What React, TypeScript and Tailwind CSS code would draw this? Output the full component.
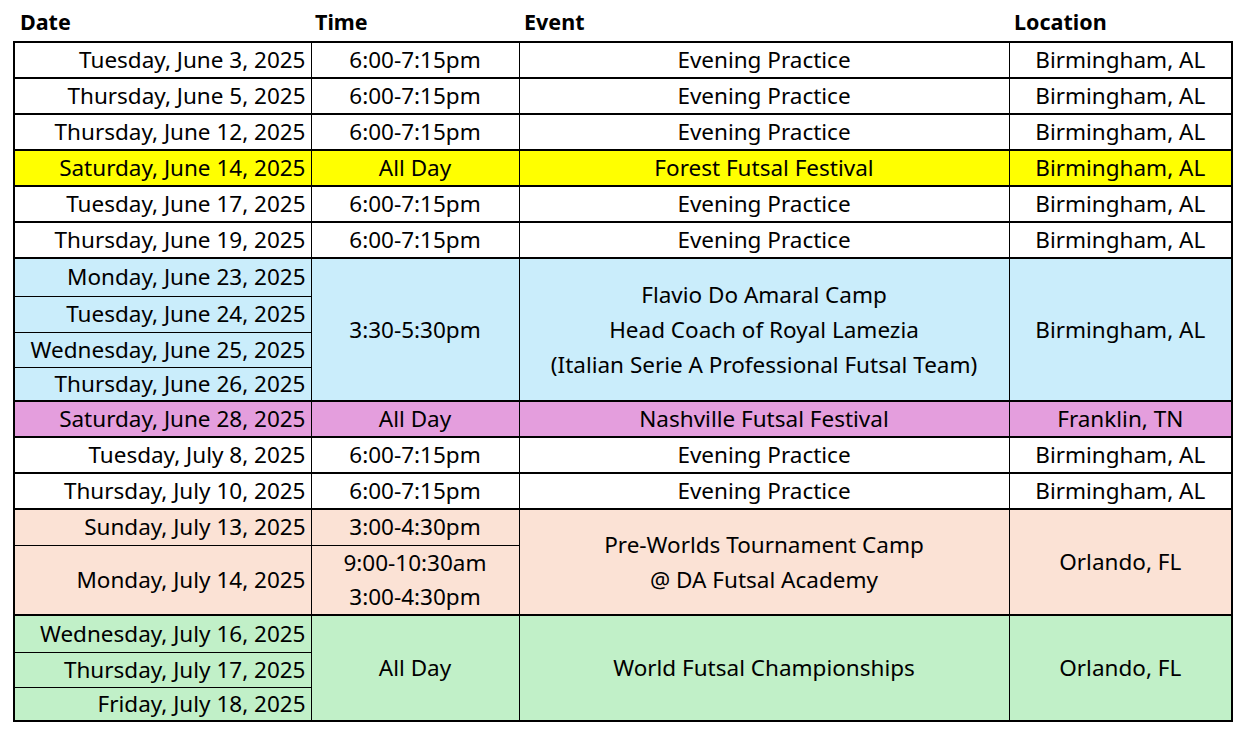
import React from "react";

type Row = {
  date: string;
  h: string;
  bg: string;
  top: "thick" | "thin";
  time?: React.ReactNode;
  event?: React.ReactNode;
  location?: string;
  span?: number;
  timeSpan?: number;
};

const yellow = "bg-[#ffff00]";
const blue = "bg-[#caedfb]";
const pink = "bg-[#e49edd]";
const peach = "bg-[#fbe2d5]";
const green = "bg-[#c1f0c8]";
const white = "bg-white";

const practice = (date: string): Row => ({
  date,
  h: "h-[36px]",
  bg: white,
  top: "thick",
  time: "6:00-7:15pm",
  event: "Evening Practice",
  location: "Birmingham, AL",
});

const Line = ({ children }: { children: React.ReactNode }) => (
  <div className="leading-[35px]">{children}</div>
);

const rows: Row[] = [
  practice("Tuesday, June 3, 2025"),
  practice("Thursday, June 5, 2025"),
  practice("Thursday, June 12, 2025"),
  {
    date: "Saturday, June 14, 2025",
    h: "h-[36px]",
    bg: yellow,
    top: "thick",
    time: "All Day",
    event: "Forest Futsal Festival",
    location: "Birmingham, AL",
  },
  practice("Tuesday, June 17, 2025"),
  practice("Thursday, June 19, 2025"),
  {
    date: "Monday, June 23, 2025",
    h: "h-[38px]",
    bg: blue,
    top: "thick",
    time: "3:30-5:30pm",
    event: (
      <>
        <Line>Flavio Do Amaral Camp</Line>
        <Line>Head Coach of Royal Lamezia</Line>
        <Line>(Italian Serie A Professional Futsal Team)</Line>
      </>
    ),
    location: "Birmingham, AL",
    span: 4,
    timeSpan: 4,
  },
  { date: "Tuesday, June 24, 2025", h: "h-[36px]", bg: blue, top: "thin" },
  { date: "Wednesday, June 25, 2025", h: "h-[35px]", bg: blue, top: "thin" },
  { date: "Thursday, June 26, 2025", h: "h-[34px]", bg: blue, top: "thin" },
  {
    date: "Saturday, June 28, 2025",
    h: "h-[36px]",
    bg: pink,
    top: "thick",
    time: "All Day",
    event: "Nashville Futsal Festival",
    location: "Franklin, TN",
  },
  practice("Tuesday, July 8, 2025"),
  practice("Thursday, July 10, 2025"),
  {
    date: "Sunday, July 13, 2025",
    h: "h-[36px]",
    bg: peach,
    top: "thick",
    time: "3:00-4:30pm",
    timeSpan: 1,
    event: (
      <>
        <Line>Pre-Worlds Tournament Camp</Line>
        <Line>@ DA Futsal Academy</Line>
      </>
    ),
    location: "Orlando, FL",
    span: 2,
  },
  {
    date: "Monday, July 14, 2025",
    h: "h-[70px]",
    bg: peach,
    top: "thin",
    time: (
      <div className="-mt-[2px]">
        <div className="leading-[35px]">9:00-10:30am</div>
        <div className="leading-[33px]">3:00-4:30pm</div>
      </div>
    ),
    timeSpan: 1,
  },
  {
    date: "Wednesday, July 16, 2025",
    h: "h-[37px]",
    bg: green,
    top: "thick",
    time: "All Day",
    event: "World Futsal Championships",
    location: "Orlando, FL",
    span: 3,
    timeSpan: 3,
  },
  { date: "Thursday, July 17, 2025", h: "h-[35px]", bg: green, top: "thin" },
  { date: "Friday, July 18, 2025", h: "h-[34px]", bg: green, top: "thin" },
];

export default function App() {
  return (
    <div className="w-[1244px] h-[733px] bg-white text-black font-['Noto_Sans','Liberation_Sans',sans-serif]">
      <div className="grid grid-cols-[296px_208px_490px_223px] ml-[14px] h-[41px] font-bold text-[21.5px] items-center pt-[4px]">
        <div className="pl-[6px]">Date</div>
        <div className="pl-[5px]">Time</div>
        <div className="pl-[6px]">Event</div>
        <div className="pl-[6px]">Location</div>
      </div>
      <table className="ml-[13px] table-fixed border-collapse border-2 border-black w-[1218px] text-[22.5px] leading-[24px]">
        <colgroup>
          <col className="w-[297px]" />
          <col className="w-[208px]" />
          <col className="w-[490px]" />
          <col className="w-[223px]" />
        </colgroup>
        <tbody>
          {rows.map((r) => {
            const topB = r.top === "thick" ? "border-t-2" : "border-t";
            return (
              <tr key={r.date} className={`${r.h} ${r.bg}`}>
                <td className={`${topB} border-x border-black text-right pr-[5px] p-0 whitespace-nowrap`}>
                  {r.date}
                </td>
                {r.time !== undefined && (
                  <td
                    rowSpan={r.timeSpan ?? 1}
                    className={`${topB} border-x border-black text-center p-0 whitespace-nowrap`}
                  >
                    {r.time}
                  </td>
                )}
                {r.event !== undefined && (
                  <td
                    rowSpan={r.span ?? 1}
                    className={`${topB} border-x border-black text-center p-0 whitespace-nowrap`}
                  >
                    {r.event}
                  </td>
                )}
                {r.location !== undefined && (
                  <td
                    rowSpan={r.span ?? 1}
                    className={`${topB} border-x border-black text-center p-0 whitespace-nowrap`}
                  >
                    {r.location}
                  </td>
                )}
              </tr>
            );
          })}
        </tbody>
      </table>
    </div>
  );
}
